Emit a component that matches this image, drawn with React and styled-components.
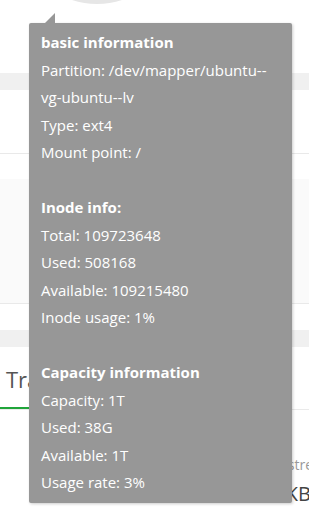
import React from 'react'
import styled, { createGlobalStyle } from 'styled-components';

const GlobalStyle = createGlobalStyle`
  html, body {
    margin: 0;
    padding: 0;
    background: #f0f0f0;
    overflow: hidden;
  }
  body {
    font-family: 'Open Sans', 'Noto Sans', sans-serif;
  }
`;

const Page = styled.div`
  position: relative;
  width: 309px;
  height: 521px;
  overflow: hidden;
  display: flex;
  flex-direction: column;
  gap: 17px;
`;

const Card = styled.div`
  background: #fff;
  display: flex;
  flex-direction: column;
`;

const DiskCard = styled(Card)`
  height: 73px;
  align-items: flex-start;
  padding-left: 17px;
  overflow: hidden;
`;

const Ring = styled.div`
  width: 160px;
  height: 160px;
  margin-top: -156px;
  box-sizing: border-box;
  border-radius: 50%;
  border: 14px solid #e6e6e6;
  flex-shrink: 0;
`;

const DiskSize = styled.div`
  width: 160px;
  margin-top: 15px;
  text-align: center;
  font-size: 13px;
  color: #999;
  white-space: nowrap;
`;

const InfoCard = styled(Card)`
  padding-bottom: 26px;
`;

const InfoRow = styled.div`
  height: ${p => p.$h}px;
  background: ${p => p.$bg || '#fff'};
  border-bottom: ${p => (p.$line ? '1px solid #e9e9e9' : 'none')};
`;

const TrafficCard = styled(Card)`
  flex: 1;
`;

const Tabs = styled.div`
  display: flex;
  height: 62px;
  border-bottom: 1px solid #eaeaea;
  align-items: stretch;
`;

const Tab = styled.div`
  box-sizing: border-box;
  padding: 17px 20px 0 6px;
  font-size: 22px;
  line-height: 30px;
  color: #555;
  border-bottom: ${p => (p.$active ? '2px solid #20a53a' : 'none')};
`;

const Stats = styled.div`
  display: flex;
  padding: 45px 0 0 269px;
`;

const Stat = styled.div`
  display: flex;
  flex-direction: column;
  white-space: nowrap;
`;

const StatLabel = styled.div`
  font-size: 14px;
  color: #999;
  line-height: 20px;
`;

const StatValue = styled.div`
  margin-top: 3px;
  font-size: 20px;
  color: #444;
  line-height: 32px;
`;

const Tip = styled.div`
  position: absolute;
  left: 29px;
  top: 23px;
  width: 263px;
  box-sizing: border-box;
  padding: 6px 12px;
  background: #979797;
  border-radius: 2px;
  box-shadow: 1px 1px 3px rgba(0, 0, 0, 0.2);
  color: #fff;
  font-size: 15px;
  line-height: 27.5px;
`;

const Arrow = styled.i`
  position: absolute;
  left: 16px;
  top: -10px;
  width: 0;
  height: 0;
  border-left: 10px solid transparent;
  border-bottom: 10px solid #979797;
`;

const TipTitle = styled.div`
  font-weight: bold;
`;

const TipLine = styled.div``;

const Spacer = styled.div`
  height: 27.5px;
`;

const App = () => {
  return (
    <Page>
      <GlobalStyle />
      <DiskCard>
        <Ring />
        <DiskSize>38.2 GB / 1 T</DiskSize>
      </DiskCard>
      <InfoCard>
        <InfoRow $h={63} $line />
        <InfoRow $h={25} />
        <InfoRow $h={124} $bg="#fafafa" $line />
      </InfoCard>
      <TrafficCard>
        <Tabs>
          <Tab $active>Traffic</Tab>
        </Tabs>
        <Stats>
          <Stat>
            <StatLabel>Upstream</StatLabel>
            <StatValue>8 KB</StatValue>
          </Stat>
        </Stats>
      </TrafficCard>

      <Tip>
        <Arrow />
        <TipTitle>basic information</TipTitle>
        <TipLine>Partition: /dev/mapper/ubuntu--vg-ubuntu--lv</TipLine>
        <TipLine>Type: ext4</TipLine>
        <TipLine>Mount point: /</TipLine>
        <Spacer />
        <TipTitle>Inode info:</TipTitle>
        <TipLine>Total: 109723648</TipLine>
        <TipLine>Used: 508168</TipLine>
        <TipLine>Available: 109215480</TipLine>
        <TipLine>Inode usage: 1%</TipLine>
        <Spacer />
        <TipTitle>Capacity information</TipTitle>
        <TipLine>Capacity: 1T</TipLine>
        <TipLine>Used: 38G</TipLine>
        <TipLine>Available: 1T</TipLine>
        <TipLine>Usage rate: 3%</TipLine>
      </Tip>
    </Page>
  )
}

export default App
